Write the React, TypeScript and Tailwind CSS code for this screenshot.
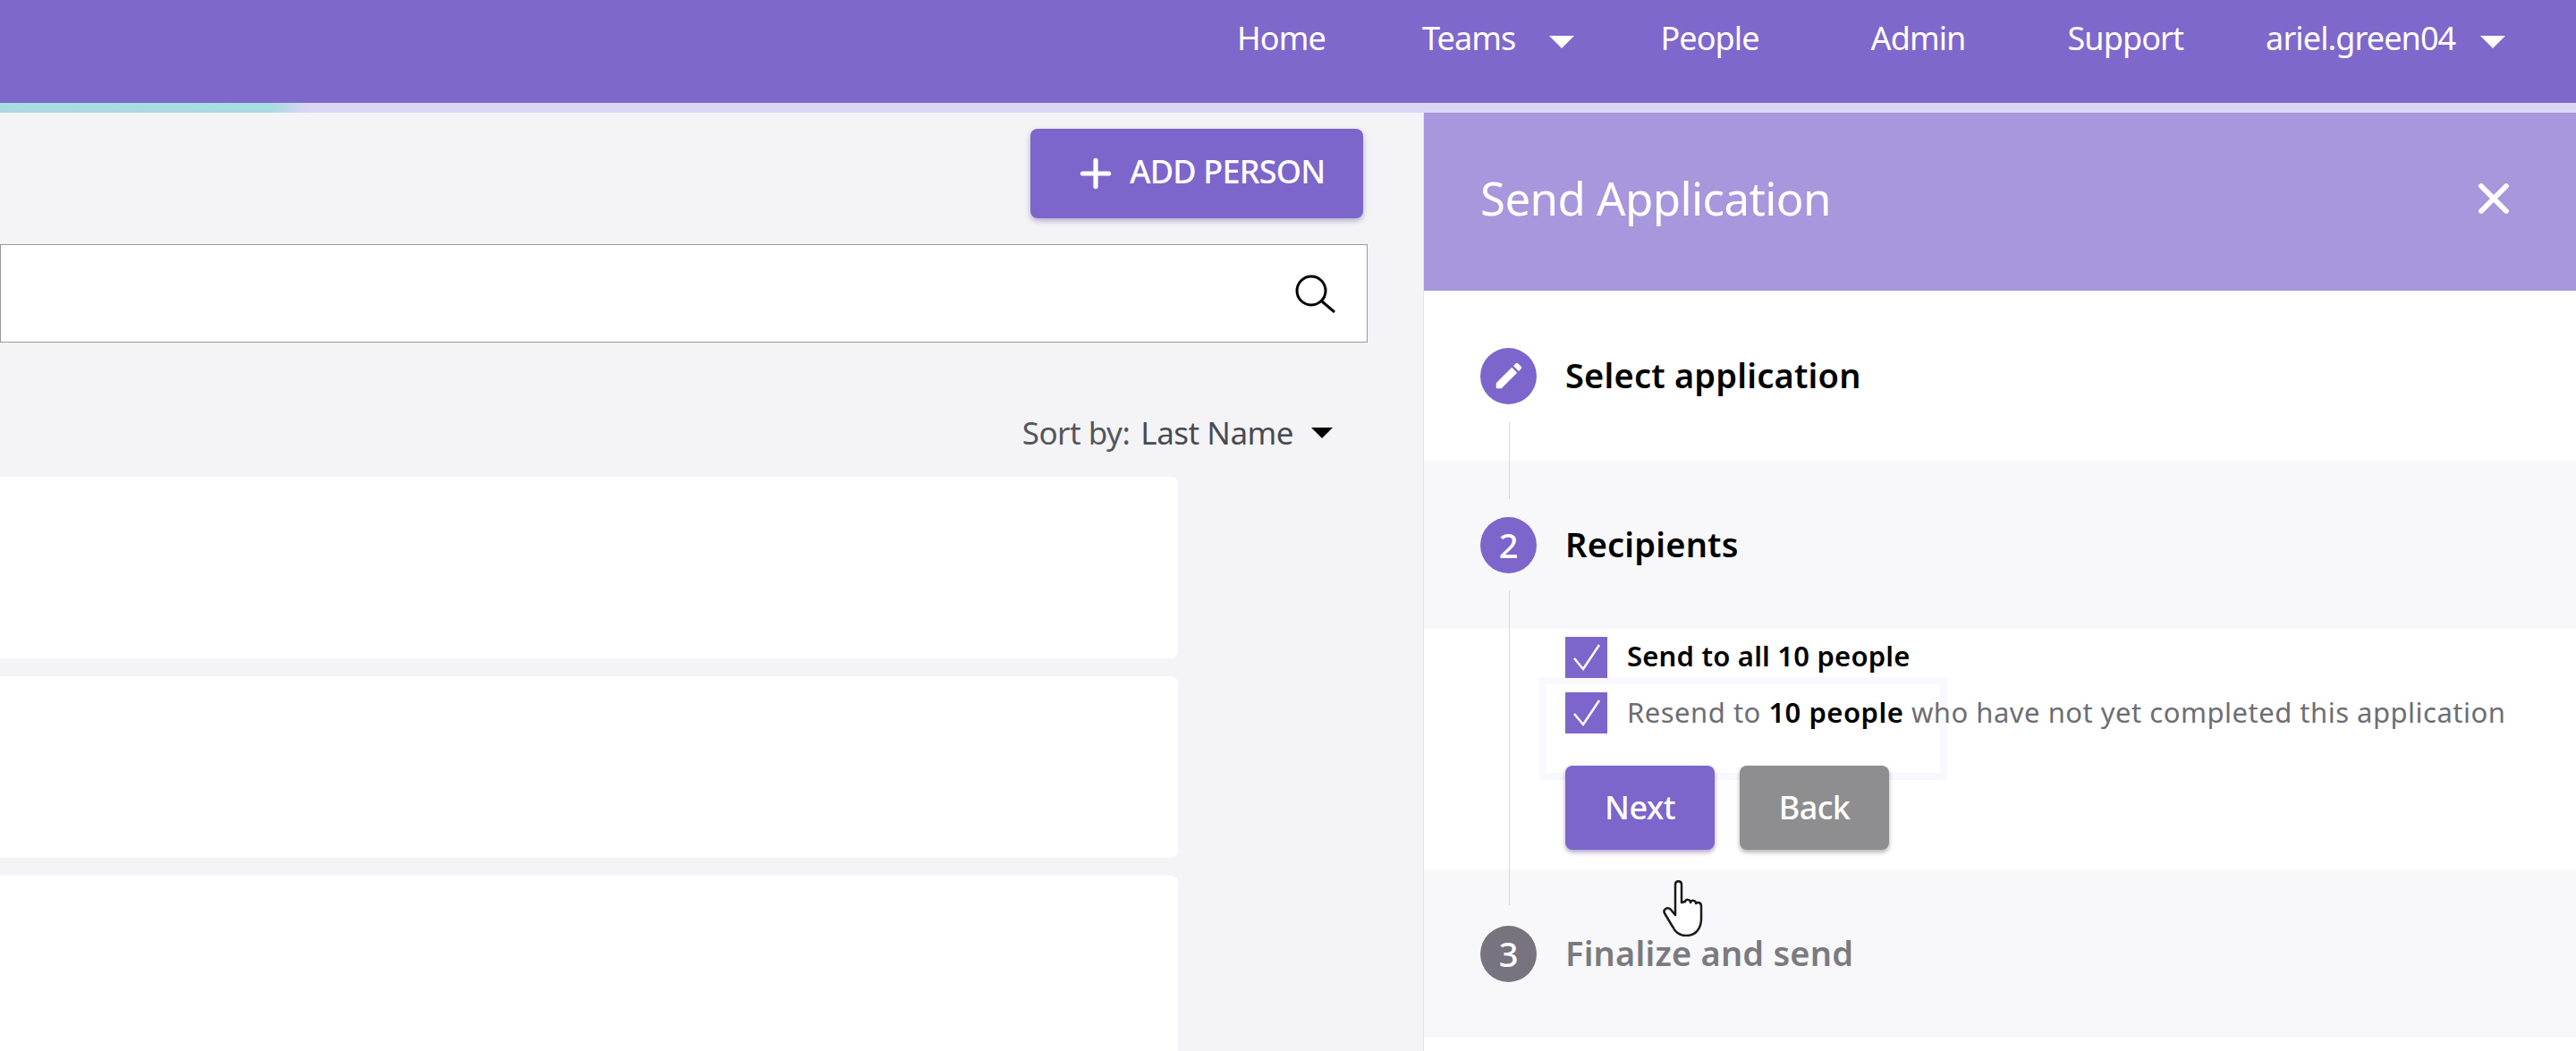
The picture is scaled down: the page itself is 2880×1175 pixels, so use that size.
import { Plus, X } from 'lucide-react';

const font = 'font-["Noto_Sans",sans-serif]';

function Caret({ className }: { className: string }) {
  return (
    <svg viewBox="0 0 28 14" className={className} fill="currentColor">
      <path d="M0 0h28L14 14z" />
    </svg>
  );
}

function StepCircle({ children, gray }: { children: React.ReactNode; gray?: boolean }) {
  return (
    <span
      className={`flex h-[63px] w-[63px] shrink-0 items-center justify-center rounded-full text-[38px] font-medium text-white ${
        gray ? 'bg-[#77737f]' : 'bg-[#7c66cc]'
      }`}
    >
      {children}
    </span>
  );
}

function Tick() {
  return (
    <span className="flex h-[46px] w-[47px] shrink-0 items-center justify-center bg-[#7c66cc]">
      <svg viewBox="0 0 40 40" className="h-[40px] w-[40px]" fill="none" stroke="white" strokeWidth="2.5">
        <path d="M6 21l10 12L34 6" />
      </svg>
    </span>
  );
}

function PersonCard() {
  return <div className="h-[203px] w-[1317px] shrink-0 rounded-r-[8px] bg-white" />;
}

export default function App() {
  return (
    <div className={`relative flex h-[1175px] w-[2880px] flex-col overflow-hidden bg-[#f4f4f6] ${font}`}>
      <header className="flex h-[115px] shrink-0 bg-[#7f68cc] pt-[19px] text-[36px] leading-[48px] tracking-[-0.9px] text-white">
        <nav className="ml-[1383px] flex items-start">
          <a className="w-[207px]">Home</a>
          <a>Teams</a>
          <Caret className="ml-[38px] mt-[21px] h-[14px] w-[28px]" />
          <a className="ml-[96px]">People</a>
          <a className="ml-[125px]">Admin</a>
          <a className="ml-[114px]">Support</a>
          <a className="ml-[92px]">ariel.green04</a>
          <Caret className="ml-[28px] mt-[21px] h-[14px] w-[28px]" />
        </nav>
      </header>

      <div className="h-[11px] shrink-0 bg-[#dcd6f5]">
        <div className="h-full w-[345px] bg-linear-to-r from-[#a8dce0] from-88% to-transparent" />
      </div>

      <div className="flex min-h-0 flex-1">
        <main className="flex w-[1591px] shrink-0 flex-col pt-[18px]">
          <div className="flex shrink-0 justify-end pr-[67px]">
            <button className="flex h-[100px] w-[372px] items-center rounded-[8px] bg-[#7d66cb] pb-[4px] pl-[50px] text-[36px] tracking-[-0.8px] text-white shadow-[0_3px_6px_rgba(60,40,120,0.35)]">
              <Plus size={50} strokeWidth={2.5} className="-ml-[2px] mt-[4px]" />
              <span className="ml-[13px] font-medium">ADD PERSON</span>
            </button>
          </div>

          <div className="mt-[29px] flex h-[110px] w-[1529px] shrink-0 items-center justify-end border border-[#9a9a9a] bg-white pr-[35px]">
            <svg viewBox="0 0 45 43" className="h-[43px] w-[45px]" fill="none" stroke="black" strokeWidth="3">
              <circle cx="18" cy="18" r="16" />
              <path d="M30 30l14 12" />
            </svg>
          </div>

          <div className="mt-[76px] flex h-[50px] shrink-0 items-center justify-end pr-[101px] text-[35px] tracking-[-0.5px] text-[#55555d]">
            <span>Sort by:</span>
            <span className="ml-[12px] text-[#4a4a55]">Last Name</span>
            <Caret className="ml-[20px] h-[12px] w-[24px] text-black" />
          </div>

          <div className="mt-[24px] flex shrink-0 flex-col gap-[20px]">
            <PersonCard />
            <PersonCard />
            <PersonCard />
          </div>
        </main>

        <aside className="relative flex w-[1289px] shrink-0 flex-col border-l border-[#e4e4e8] bg-white">
          <div className="flex h-[199px] shrink-0 items-center justify-between bg-[#a897dc] pb-[8px] pl-[63px] pr-[64px] text-white">
            <h2 className="text-[51px] tracking-[-0.6px]">Send Application</h2>
            <X size={56} strokeWidth={2.5} />
          </div>

          <section className="flex h-[190px] shrink-0 items-center gap-[32px] pl-[63px]">
            <StepCircle>
              <svg viewBox="0 0 24 24" className="h-[38px] w-[38px]" fill="white">
                <path d="M3 17.25V21h3.75L17.81 9.94l-3.75-3.75L3 17.25zM20.71 7.04a1 1 0 000-1.41l-2.34-2.34a1 1 0 00-1.41 0l-1.83 1.83 3.75 3.75 1.83-1.83z" />
              </svg>
            </StepCircle>
            <h3 className="-mt-[2px] text-[38px] font-semibold tracking-[0.2px] text-black">Select application</h3>
          </section>

          <section className="flex h-[188px] shrink-0 items-center gap-[32px] bg-[#f8f8fa] pl-[63px]">
            <StepCircle>2</StepCircle>
            <h3 className="-mt-[2px] text-[38px] font-semibold tracking-[0.2px] text-black">Recipients</h3>
          </section>

          <section className="relative z-10 h-[269px] shrink-0 pl-[158px] pt-[9px]">
            <label className="flex items-center gap-[22px] text-[31px] font-semibold tracking-[0.2px] text-black">
              <Tick />
              <span className="-mt-[3px]">Send to all 10 people</span>
            </label>
            <label className="mt-[16px] flex items-center gap-[22px] text-[31px] tracking-[0.5px] text-[#6d6d75]">
              <Tick />
              <span className="-mt-[2px]">
                Resend to <b className="font-semibold text-black">10 people</b> who have not yet completed this application
              </span>
            </label>
            <div className="mt-[36px] flex gap-[28px] text-[36px] font-medium tracking-[-0.6px] text-white">
              <button className="h-[94px] w-[167px] rounded-[8px] bg-[#7c66cc] shadow-[0_3px_5px_rgba(60,40,120,0.4)]">Next</button>
              <button className="h-[94px] w-[167px] rounded-[8px] bg-[#8e8e90] shadow-[0_3px_5px_rgba(0,0,0,0.3)]">Back</button>
            </div>
          </section>

          <section className="flex h-[188px] shrink-0 items-center gap-[32px] bg-[#f8f8fa] pl-[63px]">
            <StepCircle gray>3</StepCircle>
            <h3 className="-mt-[2px] text-[38px] font-semibold tracking-[0.2px] text-[#7a7a80]">Finalize and send</h3>
          </section>

          {/* connector line between the step circles */}
          <div className="absolute left-[95px] top-[346px] h-[86px] w-px bg-[#d9d9de]" />
          <div className="absolute left-[95px] top-[534px] h-[352px] w-px bg-[#d9d9de]" />
          {/* focus ghost left round the second checkbox */}
          <div className="pointer-events-none absolute left-[129px] top-[631px] h-[115px] w-[456px] border-[8px] border-[#f9f8fe]" />
          {/* mouse pointer */}
          <svg viewBox="0 0 46 63" className="absolute z-20 left-[267px] top-[858px] h-[63px] w-[46px]" fill="white" stroke="#1a1a1a" strokeWidth="2.5" strokeLinejoin="round">
            <path d="M14 5c0-5 7-5 7 0v20l4-1c0-3 6-3 6 1 1-3 6-3 6 1 2-2 6-1 6 3v14c0 11-6 19-17 19-8 0-12-4-15-10L2 37c-2-4 3-8 7-4l5 6z" />
          </svg>
        </aside>
      </div>
    </div>
  );
}
